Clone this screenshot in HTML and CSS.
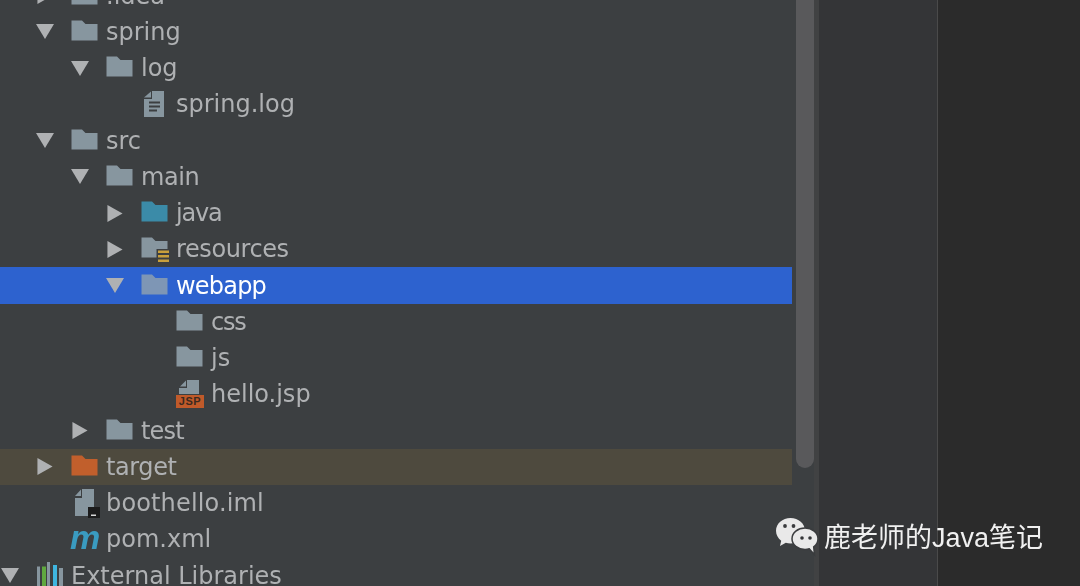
FILE: index.html
```html
<!DOCTYPE html>
<html lang="zh">
<head>
<meta charset="utf-8">
<title>Project tree</title>
<link rel="stylesheet" href="styles.css">
</head>
<body>
<svg class="defs" width="0" height="0" aria-hidden="true">
  <symbol id="down" viewBox="0 0 18 16"><path d="M0 0.5H18L9 15.5Z"/></symbol>
  <symbol id="right" viewBox="0 0 18 18"><path d="M1 0L17 9L1 18Z"/></symbol>
  <symbol id="folder" viewBox="0 0 27 21"><path d="M0.5 0.5H11L14.5 4H26.5V20.5H0.5Z"/></symbol>
</svg>
<div class="app">
  <div class="tree">
    <div class="row l1"><svg class="arrow"><use href="#right"/></svg><svg class="icon folder"><use href="#folder"/></svg><span class="name">.idea</span></div>
    <div class="row l1"><svg class="arrow"><use href="#down"/></svg><svg class="icon folder"><use href="#folder"/></svg><span class="name">spring</span></div>
    <div class="row l2"><svg class="arrow"><use href="#down"/></svg><svg class="icon folder"><use href="#folder"/></svg><span class="name">log</span></div>
    <div class="row l3"><span class="arrow"></span>
      <svg class="icon" viewBox="0 0 27 27"><path fill="#87969f" d="M11 0H23V26H3V8H11Z"/><path fill="#87969f" d="M3 6.500L10 0.500V6.500Z"/><path fill="#3c3f41" d="M8 10.500H19V12.500H8ZM8 14.500H19V16.500H8ZM8 18.500H16V20.500H8Z"/></svg>
      <span class="name">spring.log</span></div>
    <div class="row l1"><svg class="arrow"><use href="#down"/></svg><svg class="icon folder"><use href="#folder"/></svg><span class="name">src</span></div>
    <div class="row l2"><svg class="arrow"><use href="#down"/></svg><svg class="icon folder"><use href="#folder"/></svg><span class="name t1">main</span></div>
    <div class="row l3"><svg class="arrow"><use href="#right"/></svg><svg class="icon folder java"><use href="#folder"/></svg><span class="name t3">java</span></div>
    <div class="row l3"><svg class="arrow"><use href="#right"/></svg>
      <svg class="icon" viewBox="0 0 27 27"><path fill="#87969f" d="M0.500 1.500H11L14.500 5H26.500V21.500H0.500Z"/><path fill="#3c3f41" d="M15.500 13H29V29H15.500Z"/><path fill="#c9a03c" d="M17 14.500H28V17H17ZM17 19H28V21.500H17ZM17 23.500H28V26H17Z"/></svg>
      <span class="name t1">resources</span></div>
    <div class="row l3 selected"><svg class="arrow"><use href="#down"/></svg><svg class="icon folder web"><use href="#folder"/></svg><span class="name t2">webapp</span></div>
    <div class="row l4"><span class="arrow"></span><svg class="icon folder"><use href="#folder"/></svg><span class="name t3">css</span></div>
    <div class="row l4"><span class="arrow"></span><svg class="icon folder"><use href="#folder"/></svg><span class="name">js</span></div>
    <div class="row l4"><span class="arrow"></span>
      <span class="jsp"><svg class="jsp-sheet" viewBox="0 0 20 14"><path fill="#87969f" d="M8 0H20V14H0V8H8Z"/><path fill="#87969f" d="M1 6.500L7 0.500V6.500Z"/></svg><span class="jsp-badge">JSP</span></span>
      <span class="name">hello.jsp</span></div>
    <div class="row l2"><svg class="arrow"><use href="#right"/></svg><svg class="icon folder"><use href="#folder"/></svg><span class="name t2">test</span></div>
    <div class="row l1 excluded"><svg class="arrow"><use href="#right"/></svg><svg class="icon folder target"><use href="#folder"/></svg><span class="name t1">target</span></div>
    <div class="row l1"><span class="arrow"></span>
      <svg class="icon" viewBox="0 0 27 27"><path fill="#87969f" d="M11 -1H23V26H4V8H11Z"/><path fill="#87969f" d="M4 6L10 -0.500V6Z"/><path fill="#1c1c1c" d="M17 17H29V28H17Z"/><path fill="#d8d8d8" d="M20 24.500H25V26H20Z"/></svg>
      <span class="name w1">boothello.iml</span></div>
    <div class="row l1"><span class="arrow"></span><span class="icon maven">m</span><span class="name">pom.xml</span></div>
    <div class="row l0"><svg class="arrow"><use href="#down"/></svg>
      <svg class="icon" viewBox="0 0 27 27"><path fill="#87969f" d="M1 4.500H4V27H1ZM11 0H14V27H11ZM23 6H27V27H23Z"/><path fill="#5fa83f" d="M6 4.500H10V27H6Z"/><path fill="#3fb6e0" d="M17 3H21V27H17Z"/></svg>
      <span class="name">External Libraries</span></div>
  </div>
  <div class="gutter"><div class="thumb"></div></div>
  <div class="pane-mid"></div>
  <div class="pane-right"></div>
</div>
<div class="mark">
  <svg class="wechat" viewBox="0 0 42 37"><path fill="#e9e9e9" d="M14.500 0C6.500 0 0 5.600 0 12.800C0 16.900 2 20.300 5.200 22.800L4 28L9.800 24.800C11.300 25.300 12.800 25.600 14.500 25.600C22.500 25.600 29 19.900 29 12.800C29 5.600 22.500 0 14.500 0Z"/><circle fill="#3a3c3e" cx="9" cy="8" r="1.900"/><circle fill="#3a3c3e" cx="17.500" cy="8" r="1.900"/><path fill="#e9e9e9" stroke="#3a3c3e" stroke-width="1.500" d="M29 10C21.800 10 16 14.700 16 20.700C16 26.700 21.800 31.400 29 31.400C30.500 31.400 32 31.200 33.300 30.800L38.500 36.800L37.700 28.900C40.300 27 42 24 42 20.700C42 14.700 36.200 10 29 10Z"/><circle fill="#333537" cx="26" cy="20" r="1.800"/><circle fill="#333537" cx="34" cy="20" r="1.800"/></svg>
  <span class="mark-text">鹿老师的Java笔记</span>
</div>
</body>
</html>
```
FILE: styles.css
```css
html, body {
  margin: 0;
  padding: 0;
  width: 1080px;
  height: 586px;
  overflow: hidden;
  background: #3c3f41;
}
.defs { position: absolute; }
.app {
  display: flex;
  height: 586px;
  overflow: hidden;
}
.tree {
  flex: 0 0 792px;
  margin-top: -22.6px;
  font-family: "DejaVu Sans", sans-serif;
  font-size: 24px;
  color: #afb1b3;
  filter: blur(0.35px);
}
.row {
  display: flex;
  align-items: center;
  height: 36.25px;
}
.l0 { padding-left: 1px; }
.l1 { padding-left: 36px; }
.l2 { padding-left: 71px; }
.l3 { padding-left: 106px; }
.l4 { padding-left: 141px; }
.selected { background: #2d62cf; color: #fff; }
.excluded { background: #4e4a3e; }
.arrow {
  flex: 0 0 18px;
  width: 18px;
  height: 17px;
  fill: #afb1b3;
}
.icon {
  flex: 0 0 27px;
  width: 27px;
  height: 27px;
  margin-left: 17px;
  overflow: visible;
}
.folder { height: 21px; margin-top: -3px; fill: #87969f; }
.java { fill: #3b8ba8; }
.web { fill: #7e96b5; }
.target { fill: #c15f2c; }
.name {
  margin-left: 8px;
  line-height: 36px;
  white-space: pre;
}
.t1 { letter-spacing: -0.4px; }
.t2 { letter-spacing: -0.8px; }
.t3 { letter-spacing: -1.2px; }
.w1 { letter-spacing: 0.15px; }
.jsp {
  position: relative;
  flex: 0 0 28px;
  width: 28px;
  height: 28px;
  margin-left: 17px;
  margin-right: -1px;
}
.jsp-sheet {
  position: absolute;
  left: 3px;
  top: 0;
  width: 20px;
  height: 14px;
}
.jsp-badge {
  position: absolute;
  left: 0;
  top: 15px;
  width: 28px;
  height: 13px;
  background: #c05a2a;
  color: #3c2a20;
  font-family: "Liberation Sans", sans-serif;
  font-size: 11px;
  font-weight: 700;
  line-height: 13px;
  text-align: center;
  letter-spacing: 0.5px;
}
.maven {
  font-family: "Liberation Sans", sans-serif;
  font-style: italic;
  font-weight: 700;
  font-size: 34px;
  line-height: 27px;
  color: #3a9bc0;
  margin-left: 16px;
  margin-top: -4px;
  flex-basis: 28px;
  width: 28px;
}
.gutter {
  flex: 0 0 27px;
  background: #3c3f41;
  border-right: 5px solid #414243;
  box-sizing: border-box;
  padding-left: 4px;
}
.thumb {
  width: 18px;
  height: 468px;
  background: #59595b;
  border-radius: 0 0 9px 9px;
}
.pane-mid {
  flex: 0 0 118px;
  background: #343537;
  border-right: 1px solid #4a4a4a;
}
.pane-right {
  flex: 1;
  background: #2b2b2b;
}
.mark {
  position: absolute;
  left: 776px;
  top: 517px;
  display: flex;
  align-items: center;
  gap: 6px;
  height: 38px;
}
.wechat { width: 42px; height: 37px; overflow: visible; }
.mark-text {
  font-family: "Liberation Sans", "Noto Sans CJK SC", sans-serif;
  font-size: 27px;
  line-height: 38px;
  padding-top: 3px;
  color: #f0f0f0;
  white-space: pre;
}
```
